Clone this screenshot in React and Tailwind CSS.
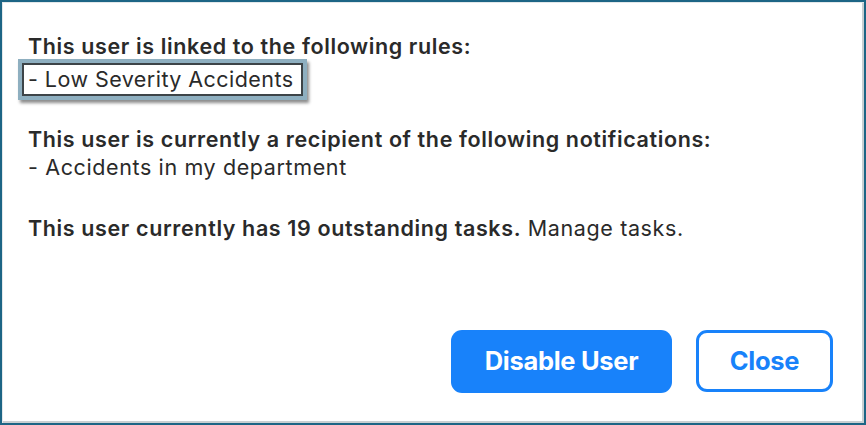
export default function App() {
  return (
    <div className="w-[866px] h-[425px] bg-white border-[2px] border-[#1d6585] shadow-[inset_1px_1px_0_#e3e8ea,inset_-2px_-2px_0_#c9cfd2] flex flex-col overflow-hidden" style={{ fontFamily: "Inter, 'Noto Sans', sans-serif" }}>
      <div className="pl-[26px] pt-[30px] text-[21.5px] leading-[29px] text-[#2a2a2a] tracking-[0.62px]">
        <div className="font-semibold">This user is linked to the following rules:</div>
        <div className="-ml-[10px] mt-[-2px] w-[289px] h-[41px] border-[4px] border-[#8eafc0] shadow-[2px_3px_3px_rgba(0,0,0,0.45)] flex items-center">
          <div className="w-full h-full border-[2px] border-[#3d4448] bg-white flex items-center pl-[4px] pb-[1px] tracking-[0.45px]">- Low Severity Accidents</div>
        </div>
        <div className="h-[25px]" />
        <div className="font-semibold">This user is currently a recipient of the following notifications:</div>
        <div className="-mt-[1px]">- Accidents in my department</div>
        <div className="h-[32px]" />
        <div><span className="font-semibold">This user currently has 19 outstanding tasks.</span> Manage tasks.</div>
      </div>
      <div className="flex-1" />
      <div className="flex justify-end gap-[24px] pr-[31px] pb-[30px]">
        <button className="w-[221px] h-[63px] rounded-[11px] bg-[#1882fa] text-white text-[25.5px] font-bold tracking-[-0.3px]">Disable User</button>
        <button className="w-[137px] h-[62px] rounded-[11px] border-[3px] border-[#1882fa] bg-white text-[#1882fa] text-[25.5px] font-bold tracking-[-0.3px]">Close</button>
      </div>
    </div>
  );
}
